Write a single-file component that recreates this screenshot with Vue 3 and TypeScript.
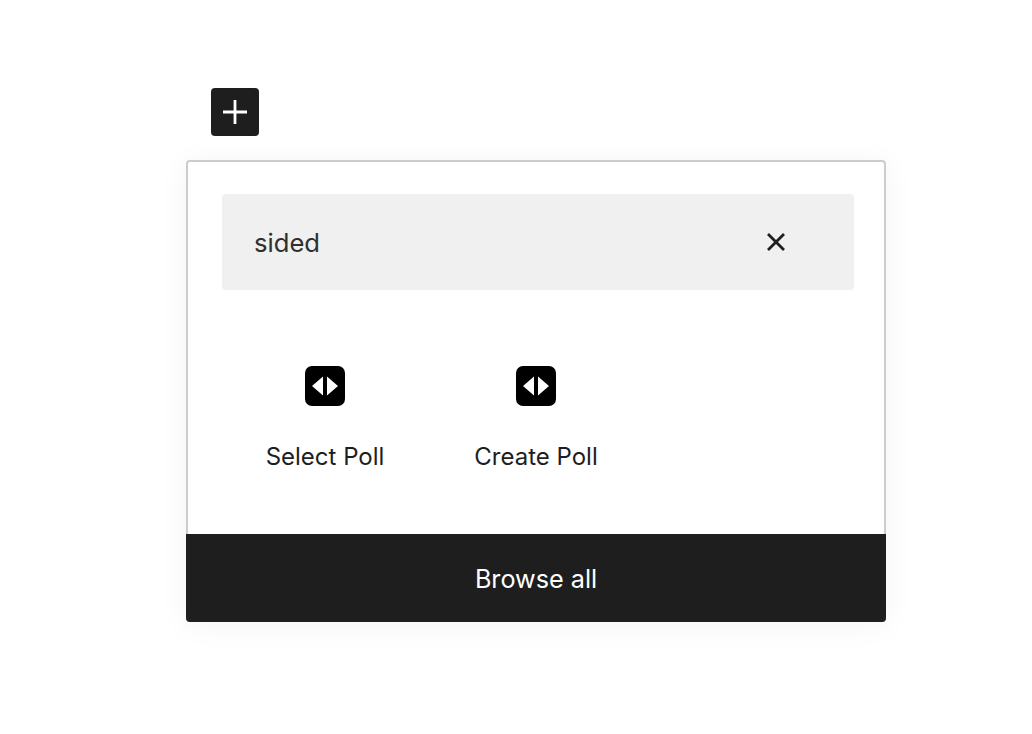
<script setup lang="ts">
import { ref } from 'vue';

type BlockItem = {
  id: string;
  title: string;
};

const query = ref('sided');

const blocks: BlockItem[] = [
  { id: 'select', title: 'Select Poll' },
  { id: 'create', title: 'Create Poll' },
];
</script>

<template>
  <div class="page">
    <button type="button" class="inserter" aria-label="Add block">
      <svg width="48" height="48" viewBox="0 0 48 48" aria-hidden="true">
        <path d="M24 12v24M12 24h24" stroke="#fff" stroke-width="2.8" fill="none" />
      </svg>
    </button>

    <div class="popover">
      <div class="search">
        <input v-model="query" type="text" aria-label="Search" />
        <button type="button" class="clear" aria-label="Reset search" @click="query = ''">
          <svg width="24" height="24" viewBox="0 0 24 24" aria-hidden="true">
            <path d="M4 4l16 16M20 4L4 20" stroke="#1e1e1e" stroke-width="2.8" fill="none" />
          </svg>
        </button>
      </div>

      <div class="blocks">
        <div v-for="block in blocks" :key="block.id" class="block">
          <svg class="block-icon" width="40" height="40" viewBox="0 0 40 40" aria-hidden="true">
            <rect width="40" height="40" rx="7" fill="#000" />
            <path d="M18 10.5v19L7 20zM22 10.5v19L33 20z" fill="#fff" />
          </svg>
          <span class="block-title">{{ block.title }}</span>
        </div>
      </div>

      <button type="button" class="browse">Browse all</button>
    </div>
  </div>
</template>

<style>
html,
body {
  background: #fff;
}
</style>

<style scoped>
.page {
  box-sizing: border-box;
  min-height: 734px;
  padding: 88px 0 0 186px;
  font-family: Inter, "Liberation Sans", sans-serif;
}

.inserter {
  display: block;
  width: 48px;
  height: 48px;
  margin-left: 25px;
  padding: 0;
  background: #1e1e1e;
  border: 0;
  border-radius: 4px;
}

.inserter svg {
  display: block;
}

.popover {
  box-sizing: border-box;
  display: flex;
  flex-direction: column;
  width: 700px;
  height: 462px;
  margin-top: 24px;
  padding-top: 32px;
  background: #fff;
  border: 2px solid #ccc;
  border-bottom: 0;
  border-radius: 4px;
  box-shadow: 0 3px 30px rgba(25, 30, 35, 0.05);
  position: relative;
}

.search {
  display: flex;
  align-items: center;
  height: 96px;
  margin: 0 30px 0 34px;
  padding: 0 66px 0 32px;
  background: #f0f0f0;
  border-radius: 4px;
}

.search input {
  flex: 1;
  min-width: 0;
  padding: 0;
  color: #2f2f2f;
  font: 25.6px Inter, "Liberation Sans", sans-serif;
  background: transparent;
  border: 0;
  outline: 0;
}

.clear {
  display: flex;
  padding: 0;
  background: none;
  border: 0;
}

.blocks {
  display: grid;
  grid-template-columns: repeat(3, 211px);
  margin: 76px 0 0 31px;
}

.block {
  display: flex;
  flex-direction: column;
  align-items: center;
}

.block-icon {
  display: block;
}

.block-title {
  margin-top: 36px;
  padding-left: 1px;
  color: #1e1e1e;
  font-size: 24px;
  line-height: 30px;
}

.browse {
  position: absolute;
  left: -2px;
  right: -2px;
  bottom: 0;
  height: 88px;
  padding: 1px 0 0;
  color: #fff;
  font: 400 25.2px Inter, "Liberation Sans", sans-serif;
  background: #1e1e1e;
  border: 0;
  border-radius: 0 0 4px 4px;
}
</style>
